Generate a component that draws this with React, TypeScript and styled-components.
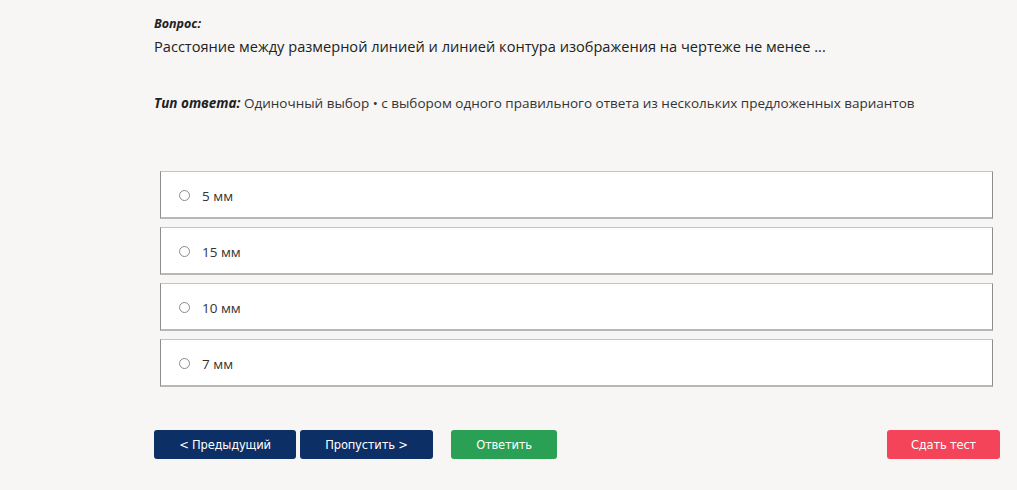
import React from "react";
import styled, { createGlobalStyle } from "styled-components";

const Global = createGlobalStyle`
  html, body { margin: 0; padding: 0; background: #f7f6f5; }
  body { font-family: "Open Sans", "Noto Sans", sans-serif; color: #222; }
`;

const Page = styled.div`
  width: 1017px;
  height: 490px;
  box-sizing: border-box;
  padding: 16px 17px 0 154px;
  background: #f7f6f5;
`;

const Label = styled.div`
  font-size: 12.5px;
  font-weight: 700;
  font-style: italic;
  color: #222;
  line-height: 16px;
`;

const Question = styled.div`
  font-size: 14.6px;
  line-height: 20px;
  margin-top: 4px;
  color: #222;
`;

const TypeLine = styled.div`
  margin-top: 38px;
  font-size: 13.5px;
  line-height: 18px;
  color: #333;
  & b {
    font-style: italic;
    font-weight: 700;
    color: #222;
  }
`;

const Options = styled.div`
  margin: 59px 7px 0 6px;
  display: flex;
  flex-direction: column;
  gap: 8px;
`;

const Option = styled.label`
  height: 48px;
  box-sizing: border-box;
  background: #fff;
  border: 1px solid #8d8d8d;
  border-top-color: #c4c4c4;
  border-bottom: 2px solid #b8b8b8;
  display: flex;
  align-items: center;
  padding: 3px 0 0 18px;
  gap: 10px;
  font-size: 13.5px;
  color: #333;
`;

const Radio = styled.span`
  width: 9px;
  height: 9px;
  border-radius: 50%;
  border: 1px solid #8a8a8a;
  background: #fff;
  margin-right: 2px;
  margin-top: -2px;
`;

const Buttons = styled.div`
  margin-top: 43px;
  display: flex;
  align-items: center;
`;

const Btn = styled.button<{ $bg: string; $w: number; $ml?: number }>`
  height: 29px;
  width: ${(p) => p.$w}px;
  margin-left: ${(p) => p.$ml ?? 0}px;
  background: ${(p) => p.$bg};
  color: #fff;
  border: none;
  border-radius: 3px;
  font-family: "DejaVu Sans Condensed", "Liberation Sans", sans-serif;
  font-size: 12.8px;
  letter-spacing: -0.2px;
  cursor: pointer;
  padding: 0;
`;

const Spacer = styled.div`
  flex: 1;
`;

const answers = ["5 мм", "15 мм", "10 мм", "7 мм"];

export default function App() {
  return (
    <>
      <Global />
      <Page>
        <Label>Вопрос:</Label>
        <Question>
          Расстояние между размерной линией и линией контура изображения на чертеже не менее ...
        </Question>
        <TypeLine>
          <b>Тип ответа:</b> Одиночный выбор • с выбором одного правильного ответа из нескольких предложенных вариантов
        </TypeLine>
        <Options>
          {answers.map((a) => (
            <Option key={a}>
              <Radio />
              {a}
            </Option>
          ))}
        </Options>
        <Buttons>
          <Btn $bg="#0c2f65" $w={142}>&lt; Предыдущий</Btn>
          <Btn $bg="#0c2f65" $w={133} $ml={4}>Пропустить &gt;</Btn>
          <Btn $bg="#29a054" $w={106} $ml={18}>Ответить</Btn>
          <Spacer />
          <Btn $bg="#f4445a" $w={113}>Сдать тест</Btn>
        </Buttons>
      </Page>
    </>
  );
}
